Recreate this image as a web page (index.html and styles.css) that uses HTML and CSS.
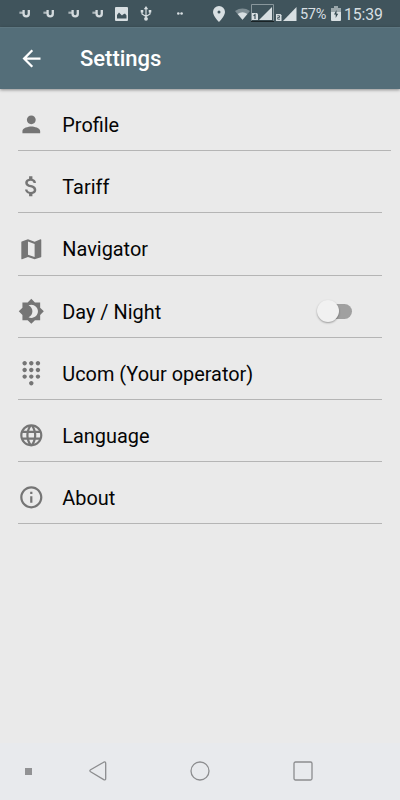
FILE: index.html
```html
<!DOCTYPE html>
<html lang="en">
<head>
    <meta charset="UTF-8">
    <meta name="viewport" content="width=device-width, initial-scale=1.0">
    <title>Settings</title>
    <link rel="stylesheet" href="styles.css">
</head>
<body>
    <svg class="symbols" aria-hidden="true">
        <symbol id="u-mark" viewBox="0 0 12 10">
            <path d="M.4 3.700h4.600" fill="none" stroke="#aab5b9" stroke-width="2.200"/>
            <path d="M4.600 1v3.800q0 2.600 2.600 2.600t2.600-2.600V1" fill="none" stroke="#d3dadd" stroke-width="2.300"/>
        </symbol>
    </svg>

    <!-- Status bar -->
    <div class="status-bar">
        <div class="notifications">
            <svg class="u-mark"><use href="#u-mark"/></svg>
            <svg class="u-mark"><use href="#u-mark"/></svg>
            <svg class="u-mark"><use href="#u-mark"/></svg>
            <svg class="u-mark"><use href="#u-mark"/></svg>
            <svg class="picture" viewBox="0 0 13 14"><path fill-rule="evenodd" d="M1 0h11q1 0 1 1v12q0 1-1 1H1q-1 0-1-1V1q0-1 1-1zM2 11.5h9.5V8.5L10 6.5 8 7.5 7 8.5 4 5.5 2 8z"/></svg>
            <svg class="usb" viewBox="0 0 12 15"><path d="M6 2v10M2 5.5V8l4 2.5L10 8V5.5" fill="none" stroke="#d8dfe2" stroke-width="1.2"/><path d="M6 0l2.2 3.3H3.8zM.7 4h2.6v2.6H.7zM8.7 4h2.6v2.6H8.7z"/><circle cx="6" cy="12.8" r="1.9"/></svg>
            <svg class="more" viewBox="0 0 6 3"><circle cx="1.3" cy="1.5" r="1.3"/><circle cx="4.6" cy="1.5" r="1.3"/></svg>
        </div>
        <div class="system">
            <svg class="pin" viewBox="0 0 12 16"><path fill-rule="evenodd" d="M6 0a6 6 0 0 0-6 6c0 4 6 10 6 10s6-6 6-10a6 6 0 0 0-6-6zm0 4.6a1.5 1.5 0 1 1 0 3 1.5 1.5 0 0 1 0-3z"/></svg>
            <svg class="wifi" viewBox="0 0 16 12"><path d="M0 2.7Q8-2.3 16 2.7L8 12z" fill="#7e8d93"/><path d="M2.8 6Q8 2.5 13.2 6L8 12z"/></svg>
            <svg class="signal-main" viewBox="0 0 23 18"><path d="M.5 17V.5h22V17" fill="none" stroke="#89979c"/><path d="M0 17.3h23" stroke="#101618"/><path d="M21 3v13H8z"/><path d="M1 9h5l1 1.3V16H1z"/><path d="M2.500 11.700l1.500-1V15" fill="none" stroke="#40545c" stroke-width="1.200"/></svg>
            <svg class="signal" viewBox="0 0 21 14"><path d="M20.500 0v14H7z"/><path d="M0 7h4.500l1 1.200V14H0z"/><path d="M1.300 8.800h2.200v1.700H1.700v1.700h2.300" fill="none" stroke="#40545c" stroke-width=".9"/></svg>
            <span class="percent">57%</span>
            <svg class="battery" viewBox="0 0 10 15"><path d="M3 0h4v2H3zM0 2h10v4H0z" fill="#9ba7ab"/><path d="M0 6h10v8q0 1-1 1H1q-1 0-1-1z"/><path d="M5.500 4L3 8.500h1.700V12l2.500-4.300H5.500z" fill="#33474f"/></svg>
            <span class="clock">15:39</span>
        </div>
    </div>

    <!-- Toolbar -->
    <header class="toolbar">
        <svg class="back" viewBox="0 0 24 24"><path d="M20 11H7.830l5.590-5.590L12 4l-8 8 8 8 1.410-1.410L7.830 13H20v-2z"/></svg>
        <h1>Settings</h1>
    </header>

    <!-- Settings list -->
    <main class="list">
        <div class="row row-wide">
            <svg class="icon" viewBox="0 0 24 24"><path d="M12 12c2.210 0 4-1.790 4-4s-1.790-4-4-4-4 1.790-4 4 1.790 4 4 4zm0 2c-2.670 0-8 1.340-8 4v2h16v-2c0-2.660-5.330-4-8-4z"/></svg>
            <span class="label">Profile</span>
        </div>
        <div class="row">
            <svg class="icon" viewBox="0 0 24 24"><path d="M11.800 10.900c-2.270-.59-3-1.200-3-2.150 0-1.090 1.010-1.850 2.700-1.850 1.780 0 2.440.85 2.500 2.100h2.210c-.07-1.720-1.120-3.300-3.210-3.810V3h-3v2.160c-1.940.42-3.500 1.680-3.500 3.610 0 2.310 1.910 3.460 4.700 4.130 2.500.6 3 1.480 3 2.410 0 .69-.49 1.790-2.700 1.790-2.060 0-2.870-.92-2.980-2.100h-2.200c.12 2.190 1.760 3.420 3.680 3.830V21h3v-2.150c1.950-.37 3.500-1.500 3.500-3.550 0-2.840-2.430-3.810-4.700-4.400z"/></svg>
            <span class="label">Tariff</span>
        </div>
        <div class="row">
            <svg class="icon" viewBox="0 0 24 24"><path d="M20.500 3l-.16.030L15 5.100 9 3 3.360 4.900c-.21.070-.36.250-.36.480V20.500c0 .28.220.5.500.5l.16-.03L9 18.900l6 2.100 5.640-1.900c.21-.07.36-.25.36-.48V3.500c0-.28-.22-.5-.5-.5zM15 19l-6-2.110V5l6 2.110V19z"/></svg>
            <span class="label">Navigator</span>
        </div>
        <div class="row">
            <svg class="icon" viewBox="0 0 24 24"><path d="M20 8.690V4h-4.690L12 .69 8.690 4H4v4.690L.69 12 4 15.310V20h4.690L12 23.310 15.310 20H20v-4.690L23.310 12 20 8.690zM12 18c-.89 0-1.740-.2-2.500-.55C11.560 16.500 13 14.420 13 12s-1.440-4.500-3.500-5.450C10.260 6.200 11.110 6 12 6c3.310 0 6 2.690 6 6s-2.690 6-6 6z"/></svg>
            <span class="label">Day / Night</span>
            <div class="switch"><div class="thumb"></div></div>
        </div>
        <div class="row">
            <svg class="icon" viewBox="0 0 24 24"><path d="M12 19c-1.100 0-2 .9-2 2s.9 2 2 2 2-.9 2-2-.9-2-2-2zM6 1c-1.100 0-2 .9-2 2s.9 2 2 2 2-.9 2-2-.9-2-2-2zm0 6c-1.100 0-2 .9-2 2s.9 2 2 2 2-.9 2-2-.9-2-2-2zm0 6c-1.100 0-2 .9-2 2s.9 2 2 2 2-.9 2-2-.9-2-2-2zm12-8c1.100 0 2-.9 2-2s-.9-2-2-2-2 .9-2 2 .9 2 2 2zm-6 8c-1.100 0-2 .9-2 2s.9 2 2 2 2-.9 2-2-.9-2-2-2zm6 0c-1.100 0-2 .9-2 2s.9 2 2 2 2-.9 2-2-.9-2-2-2zm0-6c-1.100 0-2 .9-2 2s.9 2 2 2 2-.9 2-2-.9-2-2-2zm-6 0c-1.100 0-2 .9-2 2s.9 2 2 2 2-.9 2-2-.9-2-2-2zm0-6c-1.100 0-2 .9-2 2s.9 2 2 2 2-.9 2-2-.9-2-2-2z"/></svg>
            <span class="label">Ucom (Your operator)</span>
        </div>
        <div class="row">
            <svg class="icon" viewBox="0 0 24 24"><path d="M11.990 2C6.470 2 2 6.480 2 12s4.470 10 9.990 10C17.520 22 22 17.520 22 12S17.520 2 11.990 2zm6.930 6h-2.950c-.32-1.250-.78-2.450-1.380-3.560 1.840.63 3.370 1.910 4.330 3.560zM12 4.040c.83 1.200 1.480 2.530 1.910 3.960h-3.820c.43-1.430 1.080-2.760 1.910-3.960zM4.260 14C4.100 13.360 4 12.690 4 12s.1-1.360.26-2h3.380c-.08.66-.14 1.320-.14 2s.06 1.340.14 2H4.260zm.82 2h2.950c.32 1.250.78 2.450 1.380 3.560-1.840-.63-3.370-1.900-4.330-3.560zm2.950-8H5.080c.96-1.660 2.490-2.930 4.330-3.560C8.810 5.550 8.350 6.750 8.030 8zM12 19.960c-.83-1.200-1.480-2.530-1.910-3.960h3.820c-.43 1.430-1.080 2.760-1.910 3.960zM14.340 14H9.660c-.09-.66-.16-1.320-.16-2s.07-1.350.16-2h4.680c.09.65.16 1.320.16 2s-.07 1.340-.16 2zm.25 5.560c.6-1.110 1.060-2.310 1.380-3.560h2.950c-.96 1.650-2.490 2.930-4.330 3.560zM16.360 14c.08-.66.14-1.320.14-2s-.06-1.340-.14-2h3.380c.16.64.26 1.310.26 2s-.1 1.360-.26 2h-3.380z"/></svg>
            <span class="label">Language</span>
        </div>
        <div class="row">
            <svg class="icon" viewBox="0 0 24 24"><path d="M11 17h2v-6h-2v6zm1-15C6.480 2 2 6.480 2 12s4.480 10 10 10 10-4.480 10-10S17.520 2 12 2zm0 18c-4.410 0-8-3.590-8-8s3.590-8 8-8 8 3.590 8 8-3.590 8-8 8zM11 9h2V7h-2v2z"/></svg>
            <span class="label">About</span>
        </div>
    </main>

    <!-- Navigation bar -->
    <nav class="nav-bar">
        <div class="nav-dot"></div>
        <svg class="nav-back" viewBox="0 0 18 20"><path d="M14.700 1.200L1.600 8.700q-1.500 1 0 2l13.100 7.900q2 .8 2-1.200v-15q0-2-2-1.200z"/></svg>
        <svg class="nav-home" viewBox="0 0 20 20"><circle cx="10" cy="10" r="9"/></svg>
        <svg class="nav-recent" viewBox="0 0 20 20"><rect x="1" y="1" width="18" height="18" rx="1.500"/></svg>
    </nav>
</body>
</html>
```

FILE: styles.css
```css
* {
    box-sizing: border-box;
}
body {
    display: flex;
    flex-direction: column;
    height: 800px;
    margin: 0;
    background: #eaeaea;
    font-family: Roboto, sans-serif;
    overflow: hidden;
}
svg {
    display: block;
    flex: none;
}
.symbols {
    display: none;
}

/* status bar */
.status-bar {
    display: flex;
    justify-content: space-between;
    height: 27px;
    padding: 0 17px 0 19px;
    background: #40545c;
    color: #d8dfe2;
    fill: #d8dfe2;
}
.notifications, .system {
    display: flex;
    align-items: center;
}
.u-mark {
    width: 12px;
    height: 10px;
    margin-right: 12.400px;
}
.picture {
    width: 13px;
    height: 14px;
    margin-left: -1.600px;
}
.usb {
    width: 12px;
    height: 15px;
    margin-left: 12.500px;
}
.more {
    width: 6px;
    height: 3px;
    margin-left: 25px;
}
.pin {
    width: 12px;
    height: 16px;
    margin-right: 10px;
}
.wifi {
    width: 15px;
    height: 12px;
}
.signal-main {
    width: 23px;
    height: 18px;
    margin: 0 0 1px 1px;
}
.signal {
    width: 21px;
    height: 14px;
    margin: 0 3px 0 2px;
}
.percent {
    width: 27px;
    padding-top: 2px;
    font-size: 14.500px;
    letter-spacing: -0.300px;
}
.battery {
    width: 10px;
    height: 15px;
    margin: 0 3px 0 4px;
}
.clock {
    width: 39px;
    padding-top: 1px;
    font-size: 15.800px;
    letter-spacing: -0.100px;
}

/* toolbar */
.toolbar {
    display: flex;
    align-items: center;
    height: 62px;
    padding: 0 18px 1px 17.500px;
    background: #546e79;
    border-top: 1px solid #5d7680;
    box-shadow: 0 1px 3px rgba(0,0,0,0.4);
    color: #fff;
    z-index: 1;
}
.back {
    width: 27px;
    height: 27px;
    fill: #fff;
}
.toolbar h1 {
    margin: 1px 0 0 35.500px;
    font-size: 22px;
    font-weight: 500;
}

/* list */
.list {
    flex: 1;
    padding-left: 18px;
}
.row {
    display: flex;
    align-items: center;
    width: 364px;
    height: 62.200px;
    padding: 10px 30px 0 0;
    border-bottom: 1px solid #b5b5b5;
    color: #050505;
    font-size: 19.900px;
}
.row-wide {
    width: 373px;
}
.label {
    padding-top: 2px;
}
.icon {
    width: 26.600px;
    height: 26.600px;
    margin: 0 18px 0 -0.300px;
    fill: #757575;
}
.switch {
    width: 33px;
    height: 15px;
    margin-left: auto;
    border-radius: 8px;
    background: #a0a0a0;
}
.thumb {
    width: 22px;
    height: 22px;
    margin: -4px 0 0 -2.500px;
    border-radius: 50%;
    background: #f1f1f1;
    box-shadow: 0 1px 2px rgba(0,0,0,0.35);
}

/* navigation bar */
.nav-bar {
    display: flex;
    align-items: center;
    height: 57px;
    padding: 0 0 1px 25px;
    background: #e8eaed;
}
.nav-bar svg {
    height: 20px;
    fill: none;
    stroke: #8c8d8f;
    stroke-width: 1.300;
}
.nav-dot {
    width: 7px;
    height: 7px;
    background: #919294;
}
.nav-back {
    width: 18px;
    margin-left: 56.500px;
}
.nav-home {
    width: 20px;
    margin-left: 83.500px;
}
.nav-recent {
    width: 20px;
    margin-left: 82.500px;
}
```
